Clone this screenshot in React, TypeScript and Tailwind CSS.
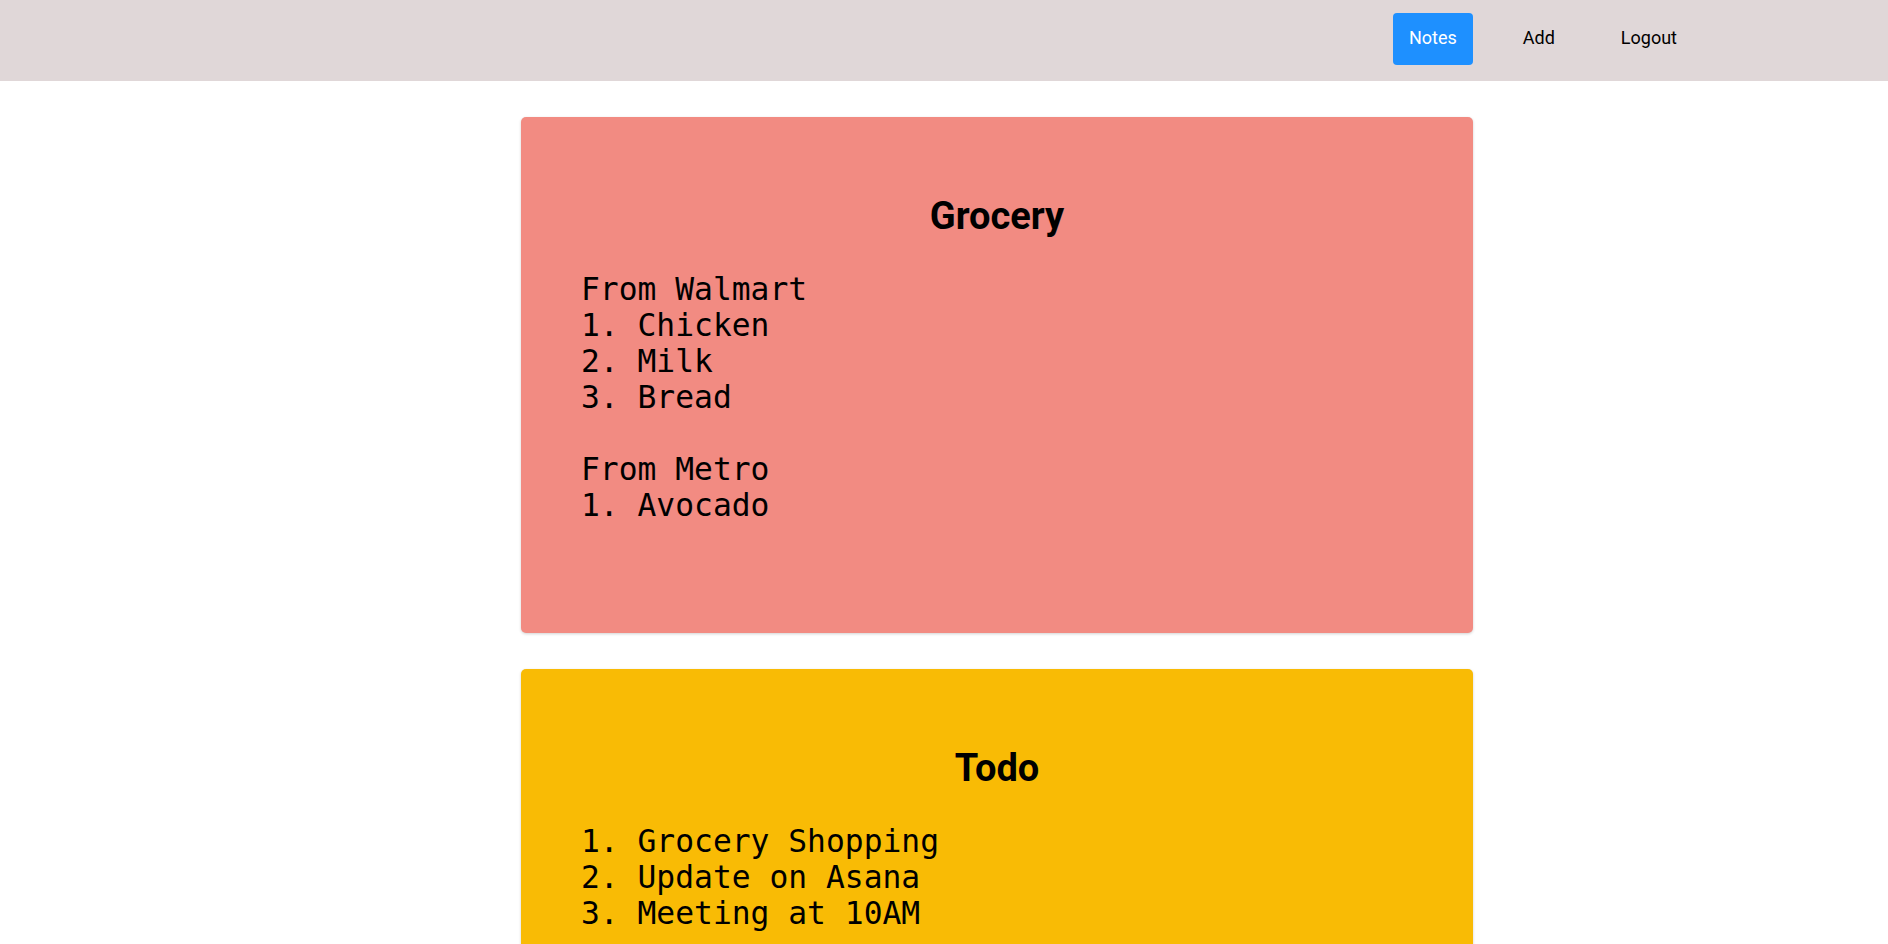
const notes = [
  {
    id: 1,
    title: 'Grocery',
    body: 'From Walmart\n1. Chicken\n2. Milk\n3. Bread\n\nFrom Metro\n1. Avocado',
    color: 'bg-[#f28b82]',
  },
  {
    id: 2,
    title: 'Todo',
    body: '1. Grocery Shopping\n2. Update on Asana\n3. Meeting at 10AM',
    color: 'bg-[#f9bb05]',
  },
];

function NavBar() {
  return (
    <header className="h-[81px] bg-[#e0d7d8] flex items-center justify-end pr-[195px] pb-[3px]">
      <nav className="flex items-center gap-[34px] text-[18px] leading-6">
        <button className="h-[52px] px-4 pb-[2px] rounded bg-[#1e90ff] text-white">Notes</button>
        <button className="h-[52px] px-4 pb-[2px] rounded text-black">Add</button>
        <button className="h-[52px] px-4 pb-[2px] rounded text-black">Logout</button>
      </nav>
    </header>
  );
}

function NoteCard({ title, body, color }: { title: string; body: string; color: string }) {
  return (
    <div className={`${color} rounded-[5px] shadow-[0_1px_3px_rgba(0,0,0,0.18)] pt-[76px] pb-[110px] pl-[60px] pr-[56px]`}>
      <h1 className="text-center font-bold text-[38px] leading-[46px] text-black -ml-1">{title}</h1>
      <pre className="mt-8 text-[31.3px] leading-9 text-black whitespace-pre-wrap font-['DejaVu_Sans_Mono',monospace]">
        {body}
      </pre>
    </div>
  );
}

export default function App() {
  return (
    <div className="min-h-screen bg-white font-['Roboto',sans-serif]">
      <NavBar />
      <main className="ml-[521px] w-[952px] pt-9 pb-9 flex flex-col gap-9">
        {notes.map((n) => (
          <NoteCard key={n.id} title={n.title} body={n.body} color={n.color} />
        ))}
      </main>
    </div>
  );
}
